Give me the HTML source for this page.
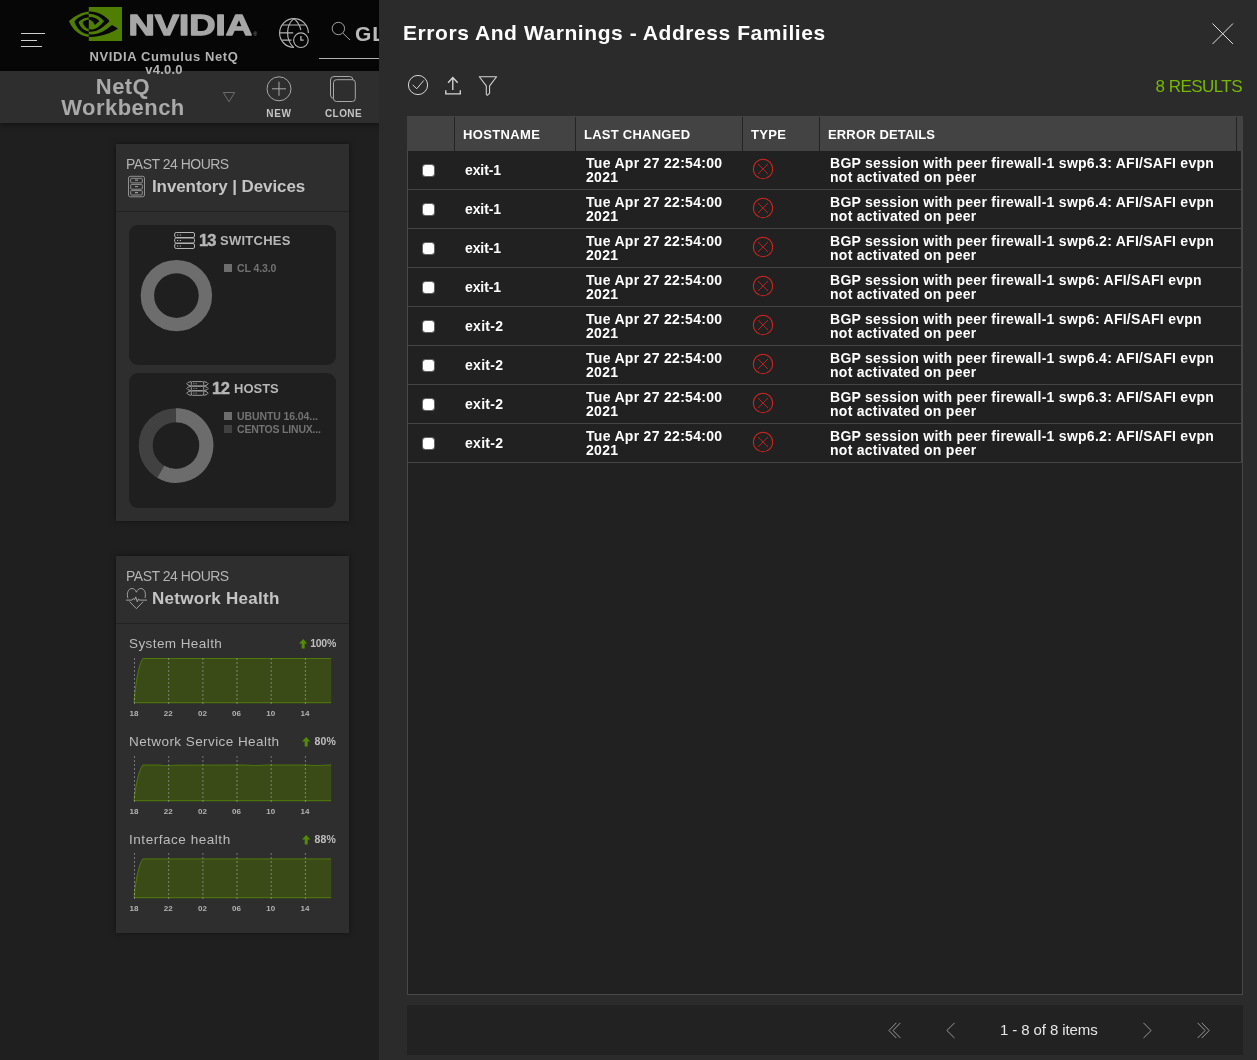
<!DOCTYPE html>
<html lang="en">
<head>
<meta charset="utf-8">
<title>NVIDIA Cumulus NetQ - Errors And Warnings</title>
<style>
*{box-sizing:border-box;margin:0;padding:0}
html,body{width:1257px;height:1060px;overflow:hidden;background:#1f1f1f;font-family:"Liberation Sans",sans-serif;color:#fff}
#app{position:relative;width:1257px;height:1060px;overflow:hidden;will-change:transform}
.abs{position:absolute}
.nw{white-space:nowrap}
/* ---------- left (dimmed) app ---------- */
#topbar{position:absolute;left:0;top:0;width:379px;height:71px;background:#060606}
#toolbar{position:absolute;left:0;top:71px;width:379px;height:52px;background:#2e2e2e;box-shadow:0 2px 6px rgba(0,0,0,.4)}
.card{position:absolute;left:116px;width:233px;background:#2e2e2e;box-shadow:0 0 6px rgba(0,0,0,.45)}
.card .hd{position:absolute;left:0;top:0;width:233px;height:68px;border-bottom:1px solid #222}
.sub{position:absolute;left:13px;width:207px;background:#1f1f1f;border-radius:9px}
.t-past{position:absolute;left:10px;font-size:14px;line-height:16px;color:#b4b4b4;letter-spacing:-.5px;white-space:nowrap}
.t-title{position:absolute;left:36px;font-size:17px;font-weight:bold;color:#c4c4c4;white-space:nowrap}
/* ---------- right panel ---------- */
#panel{position:absolute;left:379px;top:0;width:878px;height:1060px;background:#2b2b2b}
#title{position:absolute;left:24px;top:21px;font-size:21px;line-height:24px;font-weight:bold;letter-spacing:.56px;color:#fff;white-space:nowrap}
#results{position:absolute;right:15px;top:78px;font-size:17px;line-height:18px;letter-spacing:-.55px;color:#76b900;white-space:nowrap}
#grid{position:absolute;left:28px;top:116px;width:836px;height:879px;background:#212121;border:1px solid #484848;border-top:0}
#ghead{position:absolute;left:-1px;top:0;width:836px;height:35px;background:#434343}
#ghead span{position:absolute;top:1px;height:34px;line-height:36px;font-size:13px;font-weight:bold;color:#fff;padding-left:8px;border-left:1px solid #242424;white-space:nowrap}
.row{position:absolute;left:0;width:834px;height:39px;border-bottom:1px solid #454545;border-right:1px solid #454545}
.row i{position:absolute;left:14px;top:13px;width:13px;height:13px;background:#fff;background-clip:padding-box;border:1px solid rgba(255,255,255,.3);border-radius:3.500px}
.row b{position:absolute;left:57px;top:11px;font-size:14px;line-height:16px;letter-spacing:-.1px;white-space:nowrap}
.row em{position:absolute;left:178px;top:5px;font-style:normal;font-weight:bold;font-size:14px;line-height:14px;letter-spacing:.3px;white-space:nowrap}
.row p{position:absolute;left:422px;top:5px;font-weight:bold;font-size:14px;line-height:14px;letter-spacing:.27px;white-space:nowrap}
.row svg{position:absolute;left:343px;top:6px}
#pager{position:absolute;left:28px;top:1005px;width:836px;height:50px;background:#222}
#pager span{position:absolute;left:593px;top:16px;font-size:15px;line-height:18px;color:#e6e6e6;letter-spacing:-.1px;white-space:nowrap}
</style>
</head>
<body>
<div id="app">

<!-- LEFT APP -->

<div id="topbar">
  <!-- hamburger -->
  <div class="abs" style="left:21px;top:33px;width:24px;height:1px;background:#cfcfcf"></div>
  <div class="abs" style="left:21px;top:40px;width:16px;height:1px;background:#cfcfcf"></div>
  <div class="abs" style="left:21px;top:46px;width:21px;height:1px;background:#cfcfcf"></div>
  <!-- nvidia eye -->
  <svg class="abs" style="left:69px;top:7px" width="53" height="34" viewBox="0 4.063 24 15.874" preserveAspectRatio="none"><path fill="#4f7e02" d="M8.948 8.798v-1.43a6.7 6.7 0 0 1 .424-.018c3.922-.124 6.493 3.374 6.493 3.374s-2.774 3.851-5.75 3.851c-.398 0-.787-.062-1.158-.185v-4.346c1.528.185 1.837.857 2.747 2.385l2.04-1.714s-1.492-1.952-4-1.952a6.016 6.016 0 0 0-.796.035m0-4.735v2.138l.424-.027c5.45-.185 9.01 4.47 9.01 4.47s-4.08 4.964-8.33 4.964c-.37 0-.733-.035-1.095-.097v1.325c.3.035.61.062.91.062 3.957 0 6.82-2.023 9.593-4.408.459.371 2.34 1.263 2.73 1.652-2.633 2.208-8.772 3.984-12.253 3.984-.335 0-.653-.018-.971-.053v1.864H24V4.063zm0 10.326v1.131c-3.657-.654-4.673-4.46-4.673-4.46s1.758-1.944 4.673-2.262v1.237H8.94c-1.528-.186-2.73 1.245-2.73 1.245s.68 2.412 2.739 3.11M2.456 10.9s2.164-3.197 6.5-3.533V6.201C4.153 6.59 0 10.653 0 10.653s2.35 6.802 8.948 7.42v-1.237c-4.84-.6-6.492-5.936-6.492-5.936z"/></svg>
  <svg class="abs" style="left:128px;top:8px;overflow:visible" width="134" height="32"><text x=".4" y="26.700" font-family="Liberation Sans, sans-serif" font-weight="bold" font-size="29.700" fill="#a6a6a6" stroke="#a6a6a6" stroke-width="1.300" stroke-linejoin="round" textLength="123.600" lengthAdjust="spacingAndGlyphs">NVIDIA</text><text x="125.5" y="28" font-family="Liberation Sans, sans-serif" font-size="5" fill="#8a8a8a">®</text></svg>
  <div class="abs nw" style="left:64px;top:50px;width:200px;text-align:center;font-size:13px;line-height:13px;font-weight:bold;color:#b2b2b2;letter-spacing:.6px;z-index:3">NVIDIA Cumulus NetQ<br><span style="letter-spacing:.2px">v4.0.0</span></div>
  <!-- globe + clock -->
  <svg class="abs" style="left:278px;top:16px" width="34" height="34" viewBox="0 0 34 34" fill="none" stroke="#b4b4b4" stroke-width="1.150"><path d="M30.400 17.050A14.400 14.400 0 1 0 16 31.450"/><path d="M16 2.600C7.500 9 7.500 24 15.600 31.400M16 2.600c3.500 2.900 6 7.400 6.800 11.400M4.200 9h23.600M1.600 16.800h13.600M4.200 24.100h9.300"/><circle cx="22.900" cy="24.200" r="7.300"/><path d="M22.900 20v4.200h2.800" stroke-width="1.300"/></svg>
  <!-- search -->
  <svg class="abs" style="left:329px;top:19px" width="24" height="24" viewBox="0 0 24 24" fill="none" stroke="#a6a6a6" stroke-width=".95"><circle cx="9.400" cy="9.500" r="6.200"/><path d="M14 14.200l7 6.800"/></svg>
  <div class="abs nw" style="left:355px;top:21.500px;font-size:21px;line-height:24px;font-weight:bold;color:#b9b9b9;letter-spacing:1px">GLOBAL</div>
  <div class="abs" style="left:319px;top:58px;width:60px;height:1px;background:#b0b0b0"></div>
</div>
<div id="toolbar">
  <div class="abs nw" style="left:23px;top:5px;width:200px;text-align:center;font-size:22px;line-height:21px;font-weight:bold;color:#a9a9a9;letter-spacing:.45px">NetQ<br>Workbench</div>
  <svg class="abs" style="left:221px;top:19px" width="16" height="14" viewBox="0 0 16 14" fill="none" stroke="#6d6d6d" stroke-width="1"><path d="M2.300 2.500h11.400L8 11.800z"/></svg>
  <svg class="abs" style="left:265px;top:4px" width="28" height="28" viewBox="0 0 28 28" fill="none" stroke="#a8a8a8" stroke-width="1"><circle cx="14" cy="13.800" r="12"/><path d="M14 6.800v14M7 13.800h14"/></svg>
  <div class="abs nw" style="left:248px;top:36.600px;width:62px;text-align:center;font-size:10px;line-height:12px;font-weight:bold;color:#c4c4c4;letter-spacing:.7px">NEW</div>
  <svg class="abs" style="left:328px;top:3px" width="30" height="30" viewBox="0 0 30 30" fill="none" stroke="#a8a8a8" stroke-width="1"><rect x="2.500" y="2.500" width="22.500" height="22" rx="3.500"/><rect x="5.500" y="5.700" width="21.800" height="21.800" rx="3" fill="#2e2e2e"/></svg>
  <div class="abs nw" style="left:312.500px;top:36.600px;width:62px;text-align:center;font-size:10px;line-height:12px;font-weight:bold;color:#c4c4c4;letter-spacing:.4px">CLONE</div>
</div>

<!-- Inventory card -->
<div class="card" style="top:144px;height:377px">
  <div class="hd">
    <div class="t-past" style="top:12px">PAST 24 HOURS</div>
    <svg class="abs" style="left:11px;top:31px" width="19" height="23" viewBox="0 0 19 23" fill="none" stroke="#9c9c9c" stroke-width=".9"><rect x="1.500" y="1.300" width="16" height="20.500" rx="1.800"/><rect x="3.700" y="3.300" width="11.600" height="4.600" rx=".8"/><rect x="3.700" y="9.400" width="11.600" height="4.800" rx=".8"/><rect x="3.700" y="15.600" width="11.600" height="4.400" rx=".8"/><path d="M8 5.200h3M8 11.500h3M8 17.600h3" stroke-width="1.200"/></svg>
    <div class="t-title" style="top:33px;letter-spacing:-.1px">Inventory | Devices</div>
  </div>
  <div class="sub" style="top:81px;height:140px">
    <svg class="abs" style="left:44px;top:6px" width="24" height="19" viewBox="0 0 24 19" fill="none" stroke="#b4b4b4" stroke-width="1"><rect x="1.700" y="1.500" width="19.800" height="5" rx="1.500"/><rect x="1.700" y="7" width="19.800" height="5" rx="1.500"/><rect x="1.700" y="12.500" width="19.800" height="5" rx="1.500"/><path d="M4 4h1.200M6.800 4H8M4 9.500h1.200M6.800 9.500H8M4 15h1.200M6.800 15H8"/></svg>
    <div class="abs nw" style="left:70px;top:6px;font-size:16.500px;line-height:18px;font-weight:bold;color:#b6b6b6;-webkit-text-stroke:.45px #b6b6b6;letter-spacing:-1px">13</div>
    <div class="abs nw" style="left:91px;top:8px;font-size:13px;line-height:15px;font-weight:bold;color:#b6b6b6;letter-spacing:.26px">SWITCHES</div>
    <svg class="abs" style="left:8px;top:32px" width="80" height="80" viewBox="0 0 80 80"><circle cx="39.400" cy="38.600" r="29" fill="none" stroke="#6d6d6d" stroke-width="13.400"/></svg>
    <div class="abs" style="left:95.200px;top:39.400px;width:8px;height:8px;background:#6d6d6d"></div>
    <div class="abs nw" style="left:108px;top:37px;font-size:10.500px;line-height:12px;font-weight:bold;color:#727272;letter-spacing:-.1px">CL 4.3.0</div>
  </div>
  <div class="sub" style="top:229px;height:135px">
    <svg class="abs" style="left:57px;top:7px" width="24" height="17" viewBox="0 0 24 17" fill="none" stroke="#a2a2a2" stroke-width=".95"><rect x="5.300" y="1.6" width="12.400" height="4.300" rx="1.300"/><rect x="5.300" y="6.3" width="12.400" height="4.300" rx="1.300"/><rect x="5.300" y="11.0" width="12.400" height="4.300" rx="1.300"/><path d="M5.300 1.40Q-3.900 3.75 5.300 6.10M17.700 1.40Q26.700 3.75 17.700 6.10M7.300 3.75h1.100M9.700 3.75h1.100M5.300 6.10Q-3.900 8.45 5.300 10.80M17.700 6.10Q26.700 8.45 17.700 10.80M7.300 8.45h1.100M9.700 8.45h1.100M5.300 10.80Q-3.900 13.15 5.300 15.50M17.700 10.80Q26.700 13.15 17.700 15.50M7.300 13.15h1.100M9.700 13.15h1.100"/></svg>
    <div class="abs nw" style="left:83px;top:6px;font-size:16.500px;line-height:18px;font-weight:bold;color:#b6b6b6;-webkit-text-stroke:.45px #b6b6b6;letter-spacing:-.5px">12</div>
    <div class="abs nw" style="left:105px;top:8px;font-size:13px;line-height:15px;font-weight:bold;color:#b6b6b6">HOSTS</div>
    <svg class="abs" style="left:6px;top:31px" width="84" height="84" viewBox="0 0 84 84"><circle cx="41" cy="41.500" r="30.300" fill="none" stroke="#414141" stroke-width="14"/><path d="M41 11.200A30.300 30.300 0 1 1 25.850 67.740" fill="none" stroke="#6c6c6c" stroke-width="14"/></svg>
    <div class="abs" style="left:95.200px;top:39.400px;width:8px;height:8px;background:#6d6d6d"></div>
    <div class="abs nw" style="left:108px;top:37px;font-size:10.500px;line-height:12px;font-weight:bold;color:#727272;letter-spacing:-.1px">UBUNTU 16.04...</div>
    <div class="abs" style="left:95.200px;top:52.300px;width:8px;height:8px;background:#414141"></div>
    <div class="abs nw" style="left:108px;top:50px;font-size:10.500px;line-height:12px;font-weight:bold;color:#727272;letter-spacing:-.2px">CENTOS LINUX...</div>
  </div>
</div>

<!-- Network Health card -->
<div class="card" style="top:556px;height:377px">
  <div class="hd">
    <div class="t-past" style="top:12px">PAST 24 HOURS</div>
    <svg class="abs" style="left:9px;top:31px" width="24" height="24" viewBox="0 0 24 24" fill="none" stroke="#a8a8a8" stroke-width=".95" stroke-linejoin="round"><path d="M2.800 11C1.500 6 3.300 1.500 6.900 1.500c2.100 0 3.700 1.500 4.500 3.700.8-2.200 2.400-3.700 4.500-3.700 3.600 0 5.400 4.500 4.100 9.500M4.600 14.600l6.800 7.100 6.800-7.100M1 13.100h6l1.200-1.600 1.500 1.200 1-2.800 1.600 5 1.200-3 .8 1.200H22"/></svg>
    <div class="t-title" style="top:33px;letter-spacing:.28px">Network Health</div>
  </div>
  <div class="abs nw" style="left:13px;top:80.300px;font-size:13.500px;line-height:16px;color:#bcbcbc;letter-spacing:.42px">System Health</div>
  <svg class="abs" style="left:182.7px;top:83.3px" width="8.400" height="9.600" viewBox="0 0 9 10" preserveAspectRatio="none"><path d="M4.500 0L9 4.800H6.100V10H2.900V4.800H0z" fill="#548b04"/></svg>
  <div class="abs nw" style="right:13px;top:81px;font-size:10.500px;line-height:12px;font-weight:bold;color:#bebebe;letter-spacing:-.25px">100%</div>
  <svg class="abs" style="left:13px;top:101.8px;overflow:visible" width="210" height="62"><path d="M5.0 44.7 C6.5 24.8 10.0 5.5 13.800000000000011 0.5 L202.2 0.5 L202.2 44.7 Z" fill="#3a4b18"/><path d="M5.0 44.7 C6.5 24.8 10.0 5.5 13.800000000000011 0.5 L202.2 0.5" fill="none" stroke="#537e08" stroke-width=".9"/><path d="M5.0 44.7H202.2" stroke="#537e08" stroke-width="1"/><path d="M5.5 0V46.7M39.7 0V46.7M73.9 0V46.7M108.0 0V46.7M142.2 0V46.7M176.4 0V46.7" stroke="#d0d0d0" stroke-opacity=".5" stroke-width=".9" stroke-dasharray="2 2" fill="none"/><g font-family="Liberation Sans, sans-serif" font-size="8" font-weight="bold" fill="#b4b4b4" text-anchor="middle"><text x="5.0" y="58.300">18</text><text x="39.2" y="58.300">22</text><text x="73.4" y="58.300">02</text><text x="107.5" y="58.300">06</text><text x="141.7" y="58.300">10</text><text x="175.9" y="58.300">14</text></g></svg>
  <div class="abs nw" style="left:13px;top:178.300px;font-size:13.500px;line-height:16px;color:#bcbcbc;letter-spacing:.43px">Network Service Health</div>
  <svg class="abs" style="left:185.7px;top:181.3px" width="8.400" height="9.600" viewBox="0 0 9 10" preserveAspectRatio="none"><path d="M4.500 0L9 4.800H6.100V10H2.900V4.800H0z" fill="#548b04"/></svg>
  <div class="abs nw" style="right:13px;top:179px;font-size:10.500px;line-height:12px;font-weight:bold;color:#bebebe;letter-spacing:.2px">80%</div>
  <svg class="abs" style="left:13px;top:199.5px;overflow:visible" width="210" height="62"><path d="M5.0 44.7 C6.5 28.6 10.0 14.0 13.800000000000011 9.0 L30.80000000000001 9.0 Q35.80000000000001 10.2 45.80000000000001 9.2 L113.80000000000001 9.0 Q125.80000000000001 10.0 139.8 9.0 L173.8 9.0 Q185.8 10.0 202.20000000000002 9.0 L202.2 44.7 Z" fill="#3a4b18"/><path d="M5.0 44.7 C6.5 28.6 10.0 14.0 13.800000000000011 9.0 L30.80000000000001 9.0 Q35.80000000000001 10.2 45.80000000000001 9.2 L113.80000000000001 9.0 Q125.80000000000001 10.0 139.8 9.0 L173.8 9.0 Q185.8 10.0 202.20000000000002 9.0" fill="none" stroke="#537e08" stroke-width=".9"/><path d="M5.0 44.7H202.2" stroke="#537e08" stroke-width="1"/><path d="M5.5 0V46.7M39.7 0V46.7M73.9 0V46.7M108.0 0V46.7M142.2 0V46.7M176.4 0V46.7" stroke="#d0d0d0" stroke-opacity=".5" stroke-width=".9" stroke-dasharray="2 2" fill="none"/><g font-family="Liberation Sans, sans-serif" font-size="8" font-weight="bold" fill="#b4b4b4" text-anchor="middle"><text x="5.0" y="58.300">18</text><text x="39.2" y="58.300">22</text><text x="73.4" y="58.300">02</text><text x="107.5" y="58.300">06</text><text x="141.7" y="58.300">10</text><text x="175.9" y="58.300">14</text></g></svg>
  <div class="abs nw" style="left:13px;top:276.300px;font-size:13.500px;line-height:16px;color:#bcbcbc;letter-spacing:.54px">Interface health</div>
  <svg class="abs" style="left:186.2px;top:279.3px" width="8.400" height="9.600" viewBox="0 0 9 10" preserveAspectRatio="none"><path d="M4.500 0L9 4.800H6.100V10H2.900V4.800H0z" fill="#548b04"/></svg>
  <div class="abs nw" style="right:13px;top:277px;font-size:10.500px;line-height:12px;font-weight:bold;color:#bebebe;letter-spacing:.2px">88%</div>
  <svg class="abs" style="left:13px;top:297.2px;overflow:visible" width="210" height="62"><path d="M5.0 44.7 C6.5 27.2 10.0 10.9 13.800000000000011 5.9 L202.2 5.9 L202.2 44.7 Z" fill="#3a4b18"/><path d="M5.0 44.7 C6.5 27.2 10.0 10.9 13.800000000000011 5.9 L202.2 5.9" fill="none" stroke="#537e08" stroke-width=".9"/><path d="M5.0 44.7H202.2" stroke="#537e08" stroke-width="1"/><path d="M5.5 0V46.7M39.7 0V46.7M73.9 0V46.7M108.0 0V46.7M142.2 0V46.7M176.4 0V46.7" stroke="#d0d0d0" stroke-opacity=".5" stroke-width=".9" stroke-dasharray="2 2" fill="none"/><g font-family="Liberation Sans, sans-serif" font-size="8" font-weight="bold" fill="#b4b4b4" text-anchor="middle"><text x="5.0" y="58.300">18</text><text x="39.2" y="58.300">22</text><text x="73.4" y="58.300">02</text><text x="107.5" y="58.300">06</text><text x="141.7" y="58.300">10</text><text x="175.9" y="58.300">14</text></g></svg>
</div>

<!-- RIGHT PANEL -->
<div id="panel">
  <div id="title">Errors And Warnings - Address Families</div>
  <svg class="abs" style="left:832px;top:22px" width="24" height="24" viewBox="0 0 24 24" fill="none" stroke="#e0e0e0" stroke-width="1"><path d="M1.500 1.500l20.500 20.500M22 1.500L1.500 22"/></svg>
  <svg class="abs" style="left:27px;top:73px" width="24" height="24" viewBox="0 0 24 24" fill="none" stroke="#d6d6d6" stroke-width="1"><circle cx="12" cy="12" r="9.600"/><path d="M6.700 11.800l4 4 7-8.300"/></svg>
  <svg class="abs" style="left:62px;top:73px" width="24" height="24" viewBox="0 0 24 24" fill="none" stroke="#d6d6d6" stroke-width="1.350"><path d="M11.800 17.100V4.600M7.100 9.700l4.700-5.200 4.900 5.200M4.800 17.200v3.700h14.500v-3.700"/></svg>
  <svg class="abs" style="left:97px;top:73px" width="24" height="24" viewBox="0 0 24 24" fill="none" stroke="#d6d6d6" stroke-width="1.050" stroke-linejoin="round"><path d="M3.300 3.700h17.300l-7 9.200v7.300l-2.200 2.100-1.100-1V12.900z"/></svg>
  <div id="results">8 RESULTS</div>
  <div id="grid">
    <div id="ghead">
      <span style="left:0;width:47px;border-left:0"></span>
      <span style="left:47px;width:121px;letter-spacing:.35px">HOSTNAME</span>
      <span style="left:168px;width:167px;letter-spacing:.25px">LAST CHANGED</span>
      <span style="left:335px;width:77px;letter-spacing:.3px">TYPE</span>
      <span style="left:412px;width:417px;letter-spacing:.15px">ERROR DETAILS</span>
      <span style="left:829px;width:7px;padding:0"></span>
    </div>
    <div class="row" style="top:35px"><i></i><b>exit-1</b><em>Tue Apr 27 22:54:00<br>2021</em><svg width="24" height="24" viewBox="0 0 24 24"><circle cx="12" cy="12" r="9.700" fill="none" stroke="#d62622" stroke-width="1.050"/><path d="M7 7l10 10M17 7L7 17" stroke="#d62622" stroke-width=".8" fill="none"/></svg><p>BGP session with peer firewall-1 swp6.3: AFI/SAFI evpn<br>not activated on peer</p></div>
    <div class="row" style="top:74px"><i></i><b>exit-1</b><em>Tue Apr 27 22:54:00<br>2021</em><svg width="24" height="24" viewBox="0 0 24 24"><circle cx="12" cy="12" r="9.700" fill="none" stroke="#d62622" stroke-width="1.050"/><path d="M7 7l10 10M17 7L7 17" stroke="#d62622" stroke-width=".8" fill="none"/></svg><p>BGP session with peer firewall-1 swp6.4: AFI/SAFI evpn<br>not activated on peer</p></div>
    <div class="row" style="top:113px"><i></i><b>exit-1</b><em>Tue Apr 27 22:54:00<br>2021</em><svg width="24" height="24" viewBox="0 0 24 24"><circle cx="12" cy="12" r="9.700" fill="none" stroke="#d62622" stroke-width="1.050"/><path d="M7 7l10 10M17 7L7 17" stroke="#d62622" stroke-width=".8" fill="none"/></svg><p>BGP session with peer firewall-1 swp6.2: AFI/SAFI evpn<br>not activated on peer</p></div>
    <div class="row" style="top:152px"><i></i><b>exit-1</b><em>Tue Apr 27 22:54:00<br>2021</em><svg width="24" height="24" viewBox="0 0 24 24"><circle cx="12" cy="12" r="9.700" fill="none" stroke="#d62622" stroke-width="1.050"/><path d="M7 7l10 10M17 7L7 17" stroke="#d62622" stroke-width=".8" fill="none"/></svg><p>BGP session with peer firewall-1 swp6: AFI/SAFI evpn<br>not activated on peer</p></div>
    <div class="row" style="top:191px"><i></i><b style="letter-spacing:.3px">exit-2</b><em>Tue Apr 27 22:54:00<br>2021</em><svg width="24" height="24" viewBox="0 0 24 24"><circle cx="12" cy="12" r="9.700" fill="none" stroke="#d62622" stroke-width="1.050"/><path d="M7 7l10 10M17 7L7 17" stroke="#d62622" stroke-width=".8" fill="none"/></svg><p>BGP session with peer firewall-1 swp6: AFI/SAFI evpn<br>not activated on peer</p></div>
    <div class="row" style="top:230px"><i></i><b style="letter-spacing:.3px">exit-2</b><em>Tue Apr 27 22:54:00<br>2021</em><svg width="24" height="24" viewBox="0 0 24 24"><circle cx="12" cy="12" r="9.700" fill="none" stroke="#d62622" stroke-width="1.050"/><path d="M7 7l10 10M17 7L7 17" stroke="#d62622" stroke-width=".8" fill="none"/></svg><p>BGP session with peer firewall-1 swp6.4: AFI/SAFI evpn<br>not activated on peer</p></div>
    <div class="row" style="top:269px"><i></i><b style="letter-spacing:.3px">exit-2</b><em>Tue Apr 27 22:54:00<br>2021</em><svg width="24" height="24" viewBox="0 0 24 24"><circle cx="12" cy="12" r="9.700" fill="none" stroke="#d62622" stroke-width="1.050"/><path d="M7 7l10 10M17 7L7 17" stroke="#d62622" stroke-width=".8" fill="none"/></svg><p>BGP session with peer firewall-1 swp6.3: AFI/SAFI evpn<br>not activated on peer</p></div>
    <div class="row" style="top:308px"><i></i><b style="letter-spacing:.3px">exit-2</b><em>Tue Apr 27 22:54:00<br>2021</em><svg width="24" height="24" viewBox="0 0 24 24"><circle cx="12" cy="12" r="9.700" fill="none" stroke="#d62622" stroke-width="1.050"/><path d="M7 7l10 10M17 7L7 17" stroke="#d62622" stroke-width=".8" fill="none"/></svg><p>BGP session with peer firewall-1 swp6.2: AFI/SAFI evpn<br>not activated on peer</p></div>
  </div>
  <div id="pager"><svg class="abs" style="left:480px;top:17px" width="16" height="18" viewBox="0 0 16 18" fill="none" stroke="#979797" stroke-width="1"><path d="M9.300 .9L1.900 8.500l7.400 7.500M13.400 .9L6 8.500l7.400 7.500"/></svg><svg class="abs" style="left:536px;top:17px" width="16" height="18" viewBox="0 0 16 18" fill="none" stroke="#979797" stroke-width="1"><path d="M11.500 .9L3.900 8.500l7.600 7.500"/></svg><svg class="abs" style="left:733px;top:17px" width="16" height="18" viewBox="0 0 16 18" fill="none" stroke="#979797" stroke-width="1"><path d="M3.500 .9l7.600 7.600L3.500 16"/></svg><svg class="abs" style="left:789px;top:17px" width="16" height="18" viewBox="0 0 16 18" fill="none" stroke="#979797" stroke-width="1"><path d="M1.700 .9l7.400 7.600L1.700 16M5.800 .9l7.400 7.600L5.800 16"/></svg><span>1 - 8 of 8 items</span></div>
</div>

</div>
</body>
</html>
